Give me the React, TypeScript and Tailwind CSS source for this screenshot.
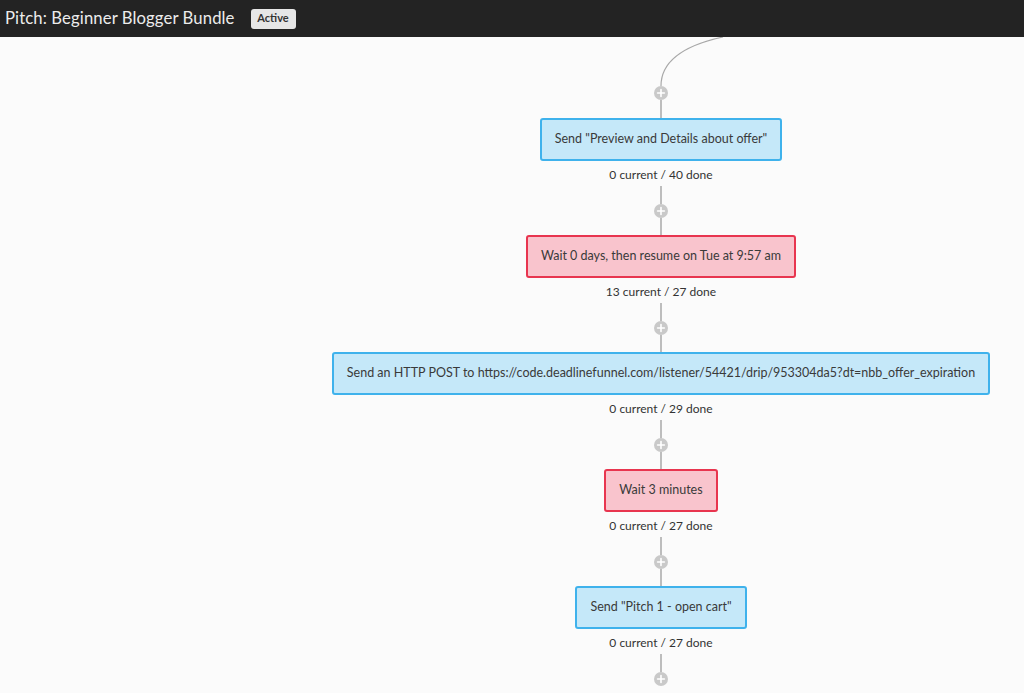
import React from "react";

type Step = {
  text: string;
  kind: "send" | "wait";
  stats: string;
};

const steps: Step[] = [
  { text: 'Send "Preview and Details about offer"', kind: "send", stats: "0 current / 40 done" },
  { text: "Wait 0 days, then resume on Tue at 9:57 am", kind: "wait", stats: "13 current / 27 done" },
  {
    text: "Send an HTTP POST to https://code.deadlinefunnel.com/listener/54421/drip/953304da5?dt=nbb_offer_expiration",
    kind: "send",
    stats: "0 current / 29 done",
  },
  { text: "Wait 3 minutes", kind: "wait", stats: "0 current / 27 done" },
  { text: 'Send "Pitch 1 - open cart"', kind: "send", stats: "0 current / 27 done" },
];

function AddButton() {
  return (
    <svg width="14" height="14" viewBox="0 0 14 14" className="block shrink-0">
      <circle cx="7" cy="7" r="7" fill="#c9c9c9" />
      <path d="M7 3.6v6.8M3.6 7h6.8" stroke="#ffffff" strokeWidth="1.6" strokeLinecap="round" />
    </svg>
  );
}

function Line({ h }: { h: string }) {
  return <div className={`w-[2px] bg-[#bdbdbd] ${h}`} />;
}

function StepNode({ step }: { step: Step }) {
  const tone =
    step.kind === "send"
      ? "bg-[#c5e8f9] border-[#3fb2ec]"
      : "bg-[#f9c4cd] border-[#e8354f]";
  return (
    <div
      className={`h-[43px] flex items-center justify-center px-[13px] border-2 rounded-[3px] whitespace-nowrap text-[12.5px] text-[#3a3a3a] ${tone}`}
    >
      {step.text}
    </div>
  );
}

export default function App() {
  return (
    <div
      className="w-[1024px] h-[693px] overflow-hidden bg-[#fbfbfb] flex flex-col"
      style={{ fontFamily: "Lato, 'Noto Sans', sans-serif" }}
    >
      <header className="h-[37px] shrink-0 bg-[#232323] flex items-center pl-[5px] gap-[16px]">
        <span className="text-[16.7px] tracking-[0.1px] text-[#ececec]">Pitch: Beginner Blogger Bundle</span>
        <span className="h-[20px] w-[45px] justify-center flex items-center rounded-[3px] bg-[#e6e6e6] text-[11px] font-bold text-[#333]">
          Active
        </span>
      </header>

      <div className="flex-1 overflow-hidden">
        <div className="w-[1322px] flex flex-col items-center">
          <svg width="160" height="49" viewBox="0 0 160 49" className="block">
            <path d="M142 0 C 96 10, 80 28, 80 49" fill="none" stroke="#a8a8a8" strokeWidth="1.2" />
          </svg>
          <AddButton />
          <Line h="h-[18px]" />
          {steps.map((s, i) => (
            <React.Fragment key={i}>
              <StepNode step={s} />
              <div className="mt-[5.5px] h-[16px] leading-[16px] text-[12px] text-[#333]">{s.stats}</div>
              <div className="mt-[3px]" />
              <Line h="h-[18.5px]" />
              <AddButton />
              {i < steps.length - 1 && <Line h="h-[17px]" />}
            </React.Fragment>
          ))}
        </div>
      </div>
    </div>
  );
}
